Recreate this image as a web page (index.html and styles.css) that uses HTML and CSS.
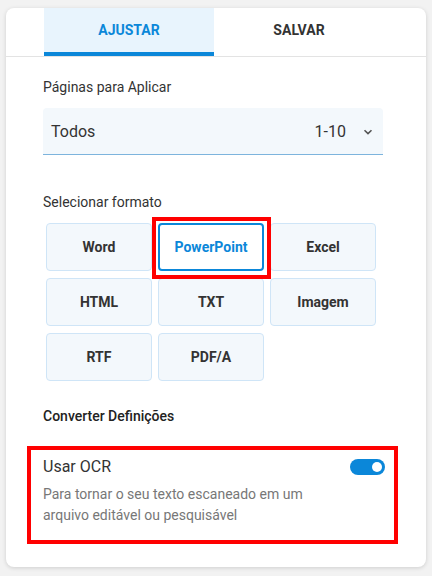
FILE: index.html
```html
<!DOCTYPE html>
<html lang="pt">
<head>
<meta charset="utf-8">
<link rel="stylesheet" href="styles.css">
</head>
<body>
<div class="card">
  <div class="tabs">
    <div class="tab active">AJUSTAR</div>
    <div class="tab">SALVAR</div>
  </div>
  <div class="content">
    <div class="label">Páginas para Aplicar</div>
    <div class="select">
      <span class="sel-value">Todos</span>
      <span class="sel-range">1-10</span>
      <svg class="chev" width="10" height="6" viewBox="0 0 10 6"><path d="M1.5 1.2 L5 4.6 L8.5 1.2" fill="none" stroke="#555" stroke-width="1.6"/></svg>
    </div>
    <div class="label label-format">Selecionar formato</div>
    <div class="grid">
      <div class="fmt">Word</div>
      <div class="fmt selected">PowerPoint</div>
      <div class="fmt">Excel</div>
      <div class="fmt">HTML</div>
      <div class="fmt">TXT</div>
      <div class="fmt">Imagem</div>
      <div class="fmt">RTF</div>
      <div class="fmt">PDF/A</div>
    </div>
    <div class="label label-settings">Converter Definições</div>
    <div class="ocr">
      <div class="ocr-head">
        <span class="ocr-title">Usar OCR</span>
        <span class="toggle"><span class="knob"></span></span>
      </div>
      <div class="ocr-desc">Para tornar o seu texto escaneado em um<br>arquivo editável ou pesquisável</div>
    </div>
  </div>
</div>
</body>
</html>
```
FILE: styles.css
```css
* { box-sizing: border-box; }
html, body { margin: 0; padding: 0; }
body {
  background: #f2f2f2;
  font-family: Roboto, "Noto Sans", sans-serif;
  color: #333;
  width: 432px;
  height: 576px;
  overflow: hidden;
}
.card {
  margin: 8px 6px 0 6px;
  width: 420px;
  height: 559px;
  background: #fff;
  border-radius: 8px;
  box-shadow: 0 1px 4px rgba(0,0,0,0.15);
  overflow: hidden;
}
.tabs {
  display: flex;
  padding-left: 38px;
  border-bottom: 1px solid #e3e3e3;
}
.tab {
  width: 170px;
  height: 48px;
  display: flex;
  align-items: center;
  justify-content: center;
  padding-bottom: 4px;
  font-size: 14px;
  font-weight: 700;
  color: #333;
}
.tab.active {
  background: #e8f4fd;
  color: #0b87d9;
  border-bottom: 4px solid #0b87d9;
  padding-bottom: 0;
}
.content {
  padding: 20px 43px 0 37px;
}
.label {
  font-size: 14px;
  line-height: 20px;
  color: #333;
}
.select {
  margin-top: 11px;
  height: 47px;
  background: #f3f8fc;
  border-bottom: 1px solid #7db4dd;
  border-radius: 4px 4px 0 0;
  display: flex;
  align-items: center;
  padding: 0 10px 0 8px;
  font-size: 16px;
  color: #333;
}
.sel-value { flex: 1; }
.sel-range { margin-right: 17px; }
.chev { display: block; margin-top: 1px; }
.label-format { margin-top: 37px; }
.grid {
  margin: 11px 0 0 3px;
  display: grid;
  grid-template-columns: repeat(3, 106px);
  grid-auto-rows: 48px;
  column-gap: 6px;
  row-gap: 7px;
}
.fmt {
  background: #f3f8fc;
  border: 1px solid #cfe5f7;
  border-radius: 4px;
  display: flex;
  align-items: center;
  justify-content: center;
  font-size: 14px;
  font-weight: 700;
  color: #333;
}
.fmt.selected {
  position: relative;
  background: #fff;
  border: 2px solid #0b87d9;
  color: #0b87d9;
}
.fmt.selected::after {
  content: "";
  position: absolute;
  left: -8px;
  top: -8px;
  right: -9px;
  bottom: -10px;
  border: 4px solid #f00;
}
.label-settings {
  margin-top: 25px;
  font-weight: 500;
  color: #222;
}
.ocr {
  margin: 20px -15px 0 -16px;
  border: 4px solid #f00;
  padding: 6px 9px 14px 12px;
}
.ocr-head {
  display: flex;
  align-items: center;
  justify-content: space-between;
  height: 22px;
}
.ocr-title {
  font-size: 16px;
  line-height: 22px;
  color: #333;
}
.toggle {
  width: 35px;
  height: 16px;
  border-radius: 8px;
  background: #0b87d9;
  display: flex;
  align-items: center;
  justify-content: flex-end;
  padding-right: 3px;
  margin-right: 0;
}
.knob {
  width: 10px;
  height: 10px;
  border-radius: 50%;
  background: #fff;
}
.ocr-desc {
  margin-top: 6px;
  font-size: 14px;
  line-height: 21px;
  color: #777;
}
```
